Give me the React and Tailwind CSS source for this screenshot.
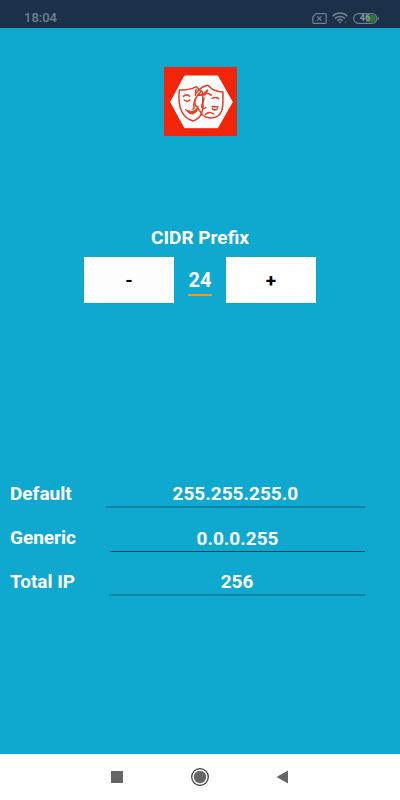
import React, { useState } from "react";

function StatusBar() {
  return (
    <header className="flex h-7 shrink-0 items-center justify-between bg-[#1c3149] pr-[21px] pl-6 pt-2 text-[#71808f]">
      <span className="text-[13px] leading-5 font-medium">18:04</span>
      <div className="flex items-center gap-[5px]">
        <svg width="15" height="11" viewBox="0 0 15 11" fill="none" stroke="currentColor" aria-hidden="true">
          <path d="M4 .7h9.2a1 1 0 0 1 1 1v7.6a1 1 0 0 1-1 1H1.8a1 1 0 0 1-1-1V3.9z" strokeWidth="1.2" />
          <path d="M5.2 3.4l4.2 4.2M9.4 3.4L5.2 7.6" strokeWidth="1.3" />
        </svg>
        <svg width="16" height="12" viewBox="0 0 16 12" fill="none" stroke="currentColor" aria-hidden="true">
          <path d="M.7 4.1a10.4 10.4 0 0 1 14.6 0M3 6.5a7.1 7.1 0 0 1 10 0M5.3 8.7a3.9 3.9 0 0 1 5.4 0" strokeWidth="1.5" />
          <path d="M6.3 9.6h3.4L8 11.6z" fill="currentColor" stroke="none" />
          <path d="M13.4 9v2.4" strokeWidth="1" opacity=".6" />
        </svg>
        <div className="relative flex h-[11px] w-[26px] items-center justify-center pr-[2px]">
          <svg className="absolute inset-0" width="26" height="11" viewBox="0 0 26 11" fill="none" aria-hidden="true">
            <path d="M13 2h6.500a3.500 3.500 0 0 1 0 7H13z" fill="#2f7037" />
            <rect x=".6" y=".6" width="23.300" height="9.800" rx="4.900" stroke="currentColor" strokeWidth="1.100" />
            <path d="M25.300 4v3" stroke="currentColor" strokeWidth="1" />
          </svg>
          <span className="relative text-[9px] leading-[11px] font-bold text-[#8f9ba6]">46</span>
        </div>
      </div>
    </header>
  );
}

function Logo() {
  return (
    <svg className="mx-auto block" width="73" height="69" viewBox="25 19 219 207" role="img" aria-label="Theatre masks">
      <path d="M25 19h219v207H25z" fill="#f32508" />
      <path d="M87 46h99l44 78-44 77H87l-42-77z" fill="#fff" stroke="#fff" strokeWidth="3" strokeLinejoin="round" />
      <g fill="none" stroke="#ea3a22" strokeWidth="4.500" strokeLinecap="round" strokeLinejoin="round">
        <path d="M71 88c18 1 36-2 51-10 5 7 12 13 19 16-1 26 5 47-3 64-6 12-16 20-26 23-19-6-33-21-38-40-5-17-5-35-3-53z" />
        <path d="M122 96c9-11 19-20 35-22 10 12 27 20 45 20-1 21 2 40-4 57-5 13-17 20-31 21-11 0-21-4-31-12" />
        <path d="M135 94c-10 10-19 21-18 32 1 14 15 19 20 32" />
        <path d="M120 114c-5 10-8 19-4 27l-8 9M121 86l-2 18" />
        <path d="M83 107c7-6 13-6 19 0M86 118c5 4 12 4 17 0" />
        <path d="M90 147c13 8 25 3 38-10-2 24-24 32-38 10z" strokeWidth="3" fill="#ea3a22" />
        <path d="M104 150c8 0 13-3 18-8" stroke="#fff" strokeWidth="3" />
        <path d="M128 103c11 2 18-2 27-14" strokeWidth="6" />
        <path d="M146 103c6-7 13-6 21 1M169 113c7-3 14-3 20 1" />
        <path d="M145 112c-1 12-8 18-7 27 2 5 8 5 13 2" />
        <path d="M169 138h18M170 144c5 5 10 5 15 0M149 161c8-7 16-7 25-1" />
      </g>
    </svg>
  );
}

function ResultRow({ id, label, value, line }) {
  return (
    <div className="flex items-start">
      <label htmlFor={id} className="mr-[34px] pl-[10px] text-[19px] leading-[26px]">
        {label}
      </label>
      <input
        id={id}
        readOnly
        value={value}
        className={`h-[27px] min-w-0 flex-1 bg-transparent text-center text-[19px] leading-[25px] outline-none ${line}`}
      />
    </div>
  );
}

export default function App() {
  const [prefix, setPrefix] = useState(24);
  const toIp = (n) => [24, 16, 8, 0].map((s) => (n >>> s) & 255).join(".");
  const total = 2 ** (32 - prefix);
  const wildcard = total - 1;
  const step = (d) => setPrefix((p) => Math.min(32, Math.max(0, p + d)));

  return (
    <div className="flex min-h-screen flex-col bg-[#0fa9d0] font-['Roboto',sans-serif] font-bold text-white">
      <StatusBar />
      <main className="flex-1 pt-[39px]">
        <Logo />
        <section className="mt-[90px] flex flex-col items-center">
          <label htmlFor="prefix" className="text-[19px] leading-6">
            CIDR Prefix
          </label>
          <div className="mt-[7px] flex items-center gap-[14px]">
            <button
              type="button"
              aria-label="Decrease prefix"
              onClick={() => step(-1)}
              className="h-[46px] w-[90px] bg-[#fdfdfd] pt-[2px] text-[19px] text-black shadow-xs"
            >
              -
            </button>
            <input
              id="prefix"
              readOnly
              value={prefix}
              className="mt-[2px] h-[30px] w-6 border-b-2 border-[#f09a1e] bg-transparent text-center text-[20px] outline-none"
            />
            <button
              type="button"
              aria-label="Increase prefix"
              onClick={() => step(1)}
              className="h-[46px] w-[90px] bg-white pt-[2px] text-[19px] text-black shadow-xs"
            >
              +
            </button>
          </div>
        </section>
        <section className="mt-[178px] flex flex-col gap-[17px] pr-[35px]">
          <ResultRow id="mask" label="Default" value={toIp(~wildcard)} line="border-b-2 border-[#0b84a3]" />
          <ResultRow id="wildcard" label="Generic" value={toIp(wildcard)} line="border-b border-[#0a4254]" />
          <ResultRow id="total" label="Total IP" value={total} line="border-b-2 border-[#0b84a3]" />
        </section>
      </main>
      <nav className="flex h-[46px] shrink-0 items-center justify-center gap-[65px] bg-white text-[#666]">
        <button type="button" aria-label="Recent apps">
          <svg className="block" width="18" height="18" viewBox="0 0 18 18" aria-hidden="true">
            <path d="M3 3h12v12H3z" fill="currentColor" />
          </svg>
        </button>
        <button type="button" aria-label="Home">
          <svg className="block" width="18" height="18" viewBox="0 0 18 18" aria-hidden="true">
            <circle cx="9" cy="9" r="8.300" fill="none" stroke="#333" strokeWidth="1.200" />
            <circle cx="9" cy="9" r="6.200" fill="currentColor" />
          </svg>
        </button>
        <button type="button" aria-label="Back">
          <svg className="block" width="18" height="18" viewBox="0 0 18 18" aria-hidden="true">
            <path d="M14 2.500v13L2.500 9z" fill="currentColor" />
          </svg>
        </button>
      </nav>
    </div>
  );
}
